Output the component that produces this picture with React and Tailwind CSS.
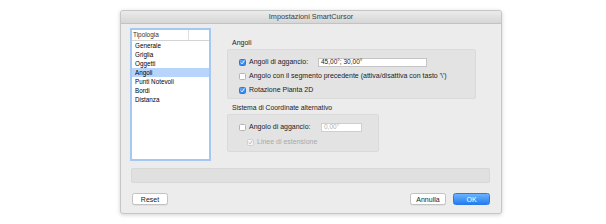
import React from 'react';

const font = { fontFamily: '"Liberation Sans", Arial, sans-serif' };

const Check = ({ checked, disabled }) => {
  if (checked) {
    return (
      <span
        className={`flex items-center justify-center w-[7px] h-[7px] rounded-[1.5px] shrink-0 ${
          disabled
            ? 'bg-[#f4f4f4] border border-[#cfcfcf]'
            : 'bg-gradient-to-b from-[#5aa6f8] to-[#2f83ef] border border-[#2a78de]'
        }`}
      >
        <svg width="5" height="5" viewBox="0 0 10 10">
          <path
            d="M2 5.5 L4.2 7.8 L8.2 2"
            fill="none"
            stroke={disabled ? '#b5b5b5' : '#ffffff'}
            strokeWidth="1.8"
            strokeLinecap="round"
            strokeLinejoin="round"
          />
        </svg>
      </span>
    );
  }
  return <span className="block w-[7px] h-[7px] rounded-[1.5px] shrink-0 bg-white border border-[#b4b4b4]" />;
};

const items = ['Generale', 'Griglia', 'Oggetti', 'Angoli', 'Punti Notevoli', 'Bordi', 'Distanza'];

export default function App() {
  return (
    <div className="w-[606px] h-[224px] bg-white pt-[10px] pl-[120px] overflow-hidden" style={font}>
      <div className="w-[382px] h-[204px] flex flex-col bg-[#ececec] border border-[#c6c6c6] rounded-[3px] shadow-[0_1px_4px_rgba(0,0,0,0.18)]">
        {/* Title bar */}
        <div className="h-[13px] flex items-center justify-center bg-gradient-to-b from-[#ebebeb] to-[#d6d6d6] border-b border-[#c2c2c2] rounded-t-[3px]">
          <span className="text-[7.3px] text-[#3c3c3c] leading-none">Impostazioni SmartCursor</span>
        </div>

        <div className="flex flex-col px-[9px] pt-[4px]">
          <div className="flex">
            {/* Category list */}
            <div className="w-[81px] h-[133px] bg-white border-2 border-[#a6c7f1] flex flex-col">
              <div className="h-[11px] flex border-b border-[#d4d4d4]">
                <div className="w-[57px] border-r border-[#e0e0e0] flex items-center pl-[1px] text-[6.4px] text-[#333]">Tipologia</div>
              </div>
              <div className="flex flex-col">
                {items.map((it) => (
                  <div
                    key={it}
                    className={`h-[9.1px] flex items-center pl-[3px] text-[6.3px] text-[#000] ${
                      it === 'Angoli' ? 'bg-[#b7d5fb]' : ''
                    }`}
                  >
                    {it}
                  </div>
                ))}
              </div>
            </div>

            {/* Right panel */}
            <div className="ml-[16px] flex flex-col text-[7px] text-[#222]">
              <div className="h-[10px] mt-[10px] flex items-center pl-[5px]">Angoli</div>
              <div className="w-[249px] h-[50px] mt-[1px] bg-[#e3e3e3] border border-[#dadada] rounded-[2px] flex flex-col pl-[11px] pt-[5px]">
                <div className="h-[14px] flex items-center">
                  <Check checked />
                  <span className="ml-[3px] w-[69px]">Angoli di aggancio:</span>
                  <div className="w-[109px] h-[9px] bg-white border border-[#c4c4c4] flex items-center pl-[2px] text-[6.5px]">
                    45,00°; 30,00°
                  </div>
                </div>
                <div className="h-[14px] flex items-center">
                  <Check />
                  <span className="ml-[3px]">Angolo con il segmento precedente (attiva/disattiva con tasto '\')</span>
                </div>
                <div className="h-[14px] flex items-center">
                  <Check checked />
                  <span className="ml-[3px]">Rotazione Pianta 2D</span>
                </div>
              </div>

              <div className="h-[10px] mt-[4px] flex items-center pl-[5px] text-[6.8px]">Sistema di Coordinate alternativo</div>
              <div className="w-[152px] h-[38px] mt-[1px] bg-[#e3e3e3] border border-[#dadada] rounded-[2px] flex flex-col pl-[11px] pt-[5px]">
                <div className="h-[14px] flex items-center">
                  <Check />
                  <span className="ml-[3px] w-[72px]">Angolo di aggancio:</span>
                  <div className="w-[41px] h-[9px] bg-white border border-[#cfcfcf] flex items-center pl-[2px] text-[6.5px] text-[#b0b0b0]">
                    0,00°
                  </div>
                </div>
                <div className="h-[12px] mt-[2px] flex items-center pl-[8px] text-[#a9a9a9]">
                  <Check checked disabled />
                  <span className="ml-[3px]">Linee di estensione</span>
                </div>
              </div>
            </div>
          </div>

          {/* Status bar */}
          <div className="mt-[7px] h-[15px] w-[359px] ml-[1px] bg-[#e0e0e0] border border-[#d8d8d8] rounded-[2px]" />

          {/* Buttons */}
          <div className="mt-[10px] flex items-center text-[7px]">
            <button className="ml-[2px] w-[36px] h-[12px] bg-white border border-[#c2c2c2] rounded-[2.5px] text-[#222] leading-none shadow-[0_0.5px_0.5px_rgba(0,0,0,0.1)]">
              Reset
            </button>
            <div className="flex-1" />
            <button className="w-[36px] h-[12px] bg-white border border-[#c2c2c2] rounded-[2.5px] text-[#222] leading-none shadow-[0_0.5px_0.5px_rgba(0,0,0,0.1)]">
              Annulla
            </button>
            <button className="ml-[7px] mr-[2px] w-[37px] h-[12px] bg-gradient-to-b from-[#6cb3fa] to-[#1f7ef3] border border-[#2a7be6] rounded-[2.5px] text-white leading-none">
              OK
            </button>
          </div>
        </div>
      </div>
    </div>
  );
}
